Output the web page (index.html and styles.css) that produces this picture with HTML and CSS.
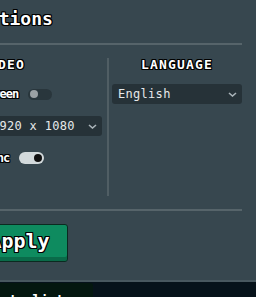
FILE: index.html
```html
<!DOCTYPE html>
<html lang="en">
<head>
    <meta charset="UTF-8">
    <meta name="viewport" content="width=device-width, initial-scale=1.0">
    <title>Options</title>
    <link rel="stylesheet" href="styles.css">
</head>
<body>
    <div class="dialog">
        <h1 class="title">Options</h1>
        <div class="rule"></div>

        <div class="columns">
            <!-- Video settings -->
            <div class="col col-video">
                <h2 class="heading heading-video">Video</h2>
                <div class="row row-fullscreen">
                    <span class="label">Fullscreen</span>
                    <span class="toggle"><span class="knob"></span></span>
                </div>
                <div class="select select-res">
                    <span>1920 x 1080</span>
                    <svg width="9" height="5" viewBox="0 0 9 5"><polyline points="1,1 4.5,4 8,1" fill="none" stroke="#aab4b9" stroke-width="1.6"/></svg>
                </div>
                <div class="row row-vsync">
                    <span class="label">Vsync</span>
                    <span class="toggle on"><span class="knob"></span></span>
                </div>
            </div>

            <div class="divider"></div>

            <!-- Language settings -->
            <div class="col col-lang">
                <h2 class="heading">Language</h2>
                <div class="select select-lang">
                    <span>English</span>
                    <svg width="9" height="5" viewBox="0 0 9 5"><polyline points="1,1 4.5,4 8,1" fill="none" stroke="#aab4b9" stroke-width="1.6"/></svg>
                </div>
            </div>
        </div>

        <div class="rule"></div>
        <button class="apply">Apply</button>
    </div>

    <div class="footer">
        <div class="back">Back to list</div>
    </div>
</body>
</html>
```

FILE: styles.css
```css
body {
    margin: 0;
    background-color: #06121a;
    font-family: "DejaVu Sans Mono", monospace;
    color: #fff;
    overflow: hidden;
}

.dialog {
    margin-left: -74px;
    padding: 8px 14px 18px 14px;
    background-color: #37474f;
    border-bottom: 2px solid #48585f;
}

.title {
    margin: 0;
    padding-left: 37px;
    font-size: 18px;
    line-height: 22px;
    font-weight: bold;
    text-shadow: 1px 0 #000, -1px 0 #000, 0 1px #000, 0 -1px #000,
                 1px 1px #000, -1px -1px #000, 1px -1px #000, -1px 1px #000;
}

.rule {
    height: 2px;
    background-color: #56646a;
    margin-top: 13px;
}

.columns {
    display: grid;
    grid-template-columns: 167px 2px 1fr;
    margin-top: 13px;
}

.col {
    display: flex;
    flex-direction: column;
    gap: 12px;
    padding-bottom: 28px;
}

.col-video {
    align-items: flex-start;
    padding-right: 5px;
}

.col-lang {
    padding-left: 3px;
}

.divider {
    background-color: #505e64;
}

.heading {
    margin: 0;
    font-size: 13px;
    line-height: 14px;
    font-weight: bold;
    letter-spacing: 1.2px;
    text-transform: uppercase;
    text-align: center;
    text-shadow: 1px 0 #000, -1px 0 #000, 0 1px #000, 0 -1px #000,
                 1px 1px #000, -1px -1px #000, 1px -1px #000, -1px 1px #000;
}

.heading-video {
    margin-left: 40px;
}

.row {
    display: flex;
    align-items: center;
    gap: 10px;
    height: 20px;
}

.row-fullscreen {
    margin-left: 16px;
}

.row-vsync {
    margin-left: 38px;
}

.label {
    font-size: 12px;
    font-weight: bold;
    letter-spacing: -1px;
    text-shadow: 1px 0 #000, -1px 0 #000, 0 1px #000, 0 -1px #000,
                 1px 1px #000, -1px -1px #000, 1px -1px #000, -1px 1px #000;
}

.toggle {
    display: flex;
    align-items: center;
    width: 24px;
    height: 11px;
    padding: 0 2px;
    box-sizing: border-box;
    border-radius: 6px;
    background-color: #29363c;
}

.toggle.on {
    justify-content: flex-end;
    width: 25px;
    height: 12px;
    background-color: #d3dadc;
}

.knob {
    width: 8px;
    height: 8px;
    border-radius: 50%;
    background-color: #9ba1a4;
}

.toggle.on .knob {
    background-color: #111;
}

.select {
    display: flex;
    align-items: center;
    justify-content: space-between;
    height: 20px;
    padding: 0 5px 0 6px;
    box-sizing: border-box;
    border-radius: 3px;
    background-color: #263238;
    color: #e6e9ea;
    font-size: 12px;
    letter-spacing: 0.3px;
}

.select-res {
    align-self: flex-end;
    width: 116px;
}

.select-lang {
    width: 130px;
}

.apply {
    display: block;
    margin: 13px 0 0 31px;
    width: 97px;
    height: 38px;
    padding: 0 0 4px 0;
    border: 1px solid #0b2a20;
    border-radius: 3px;
    background-color: #0e8b5f;
    box-shadow: inset 0 -4px 0 #0a6b49;
    color: #fff;
    font-family: "DejaVu Sans Mono", monospace;
    font-size: 20px;
    font-weight: bold;
    text-shadow: 1px 0 #000, -1px 0 #000, 0 1px #000, 0 -1px #000,
                 1px 1px #000, -1px -1px #000, 1px -1px #000, -1px 1px #000;
}

.footer {
    height: 20px;
    padding-top: 1px;
    margin-left: -40px;
}

.back {
    width: 133px;
    height: 20px;
    padding: 9px 0 0 10px;
    box-sizing: border-box;
    border-radius: 3px 3px 0 0;
    background-color: #04170f;
    font-size: 13px;
    font-weight: bold;
}
```
